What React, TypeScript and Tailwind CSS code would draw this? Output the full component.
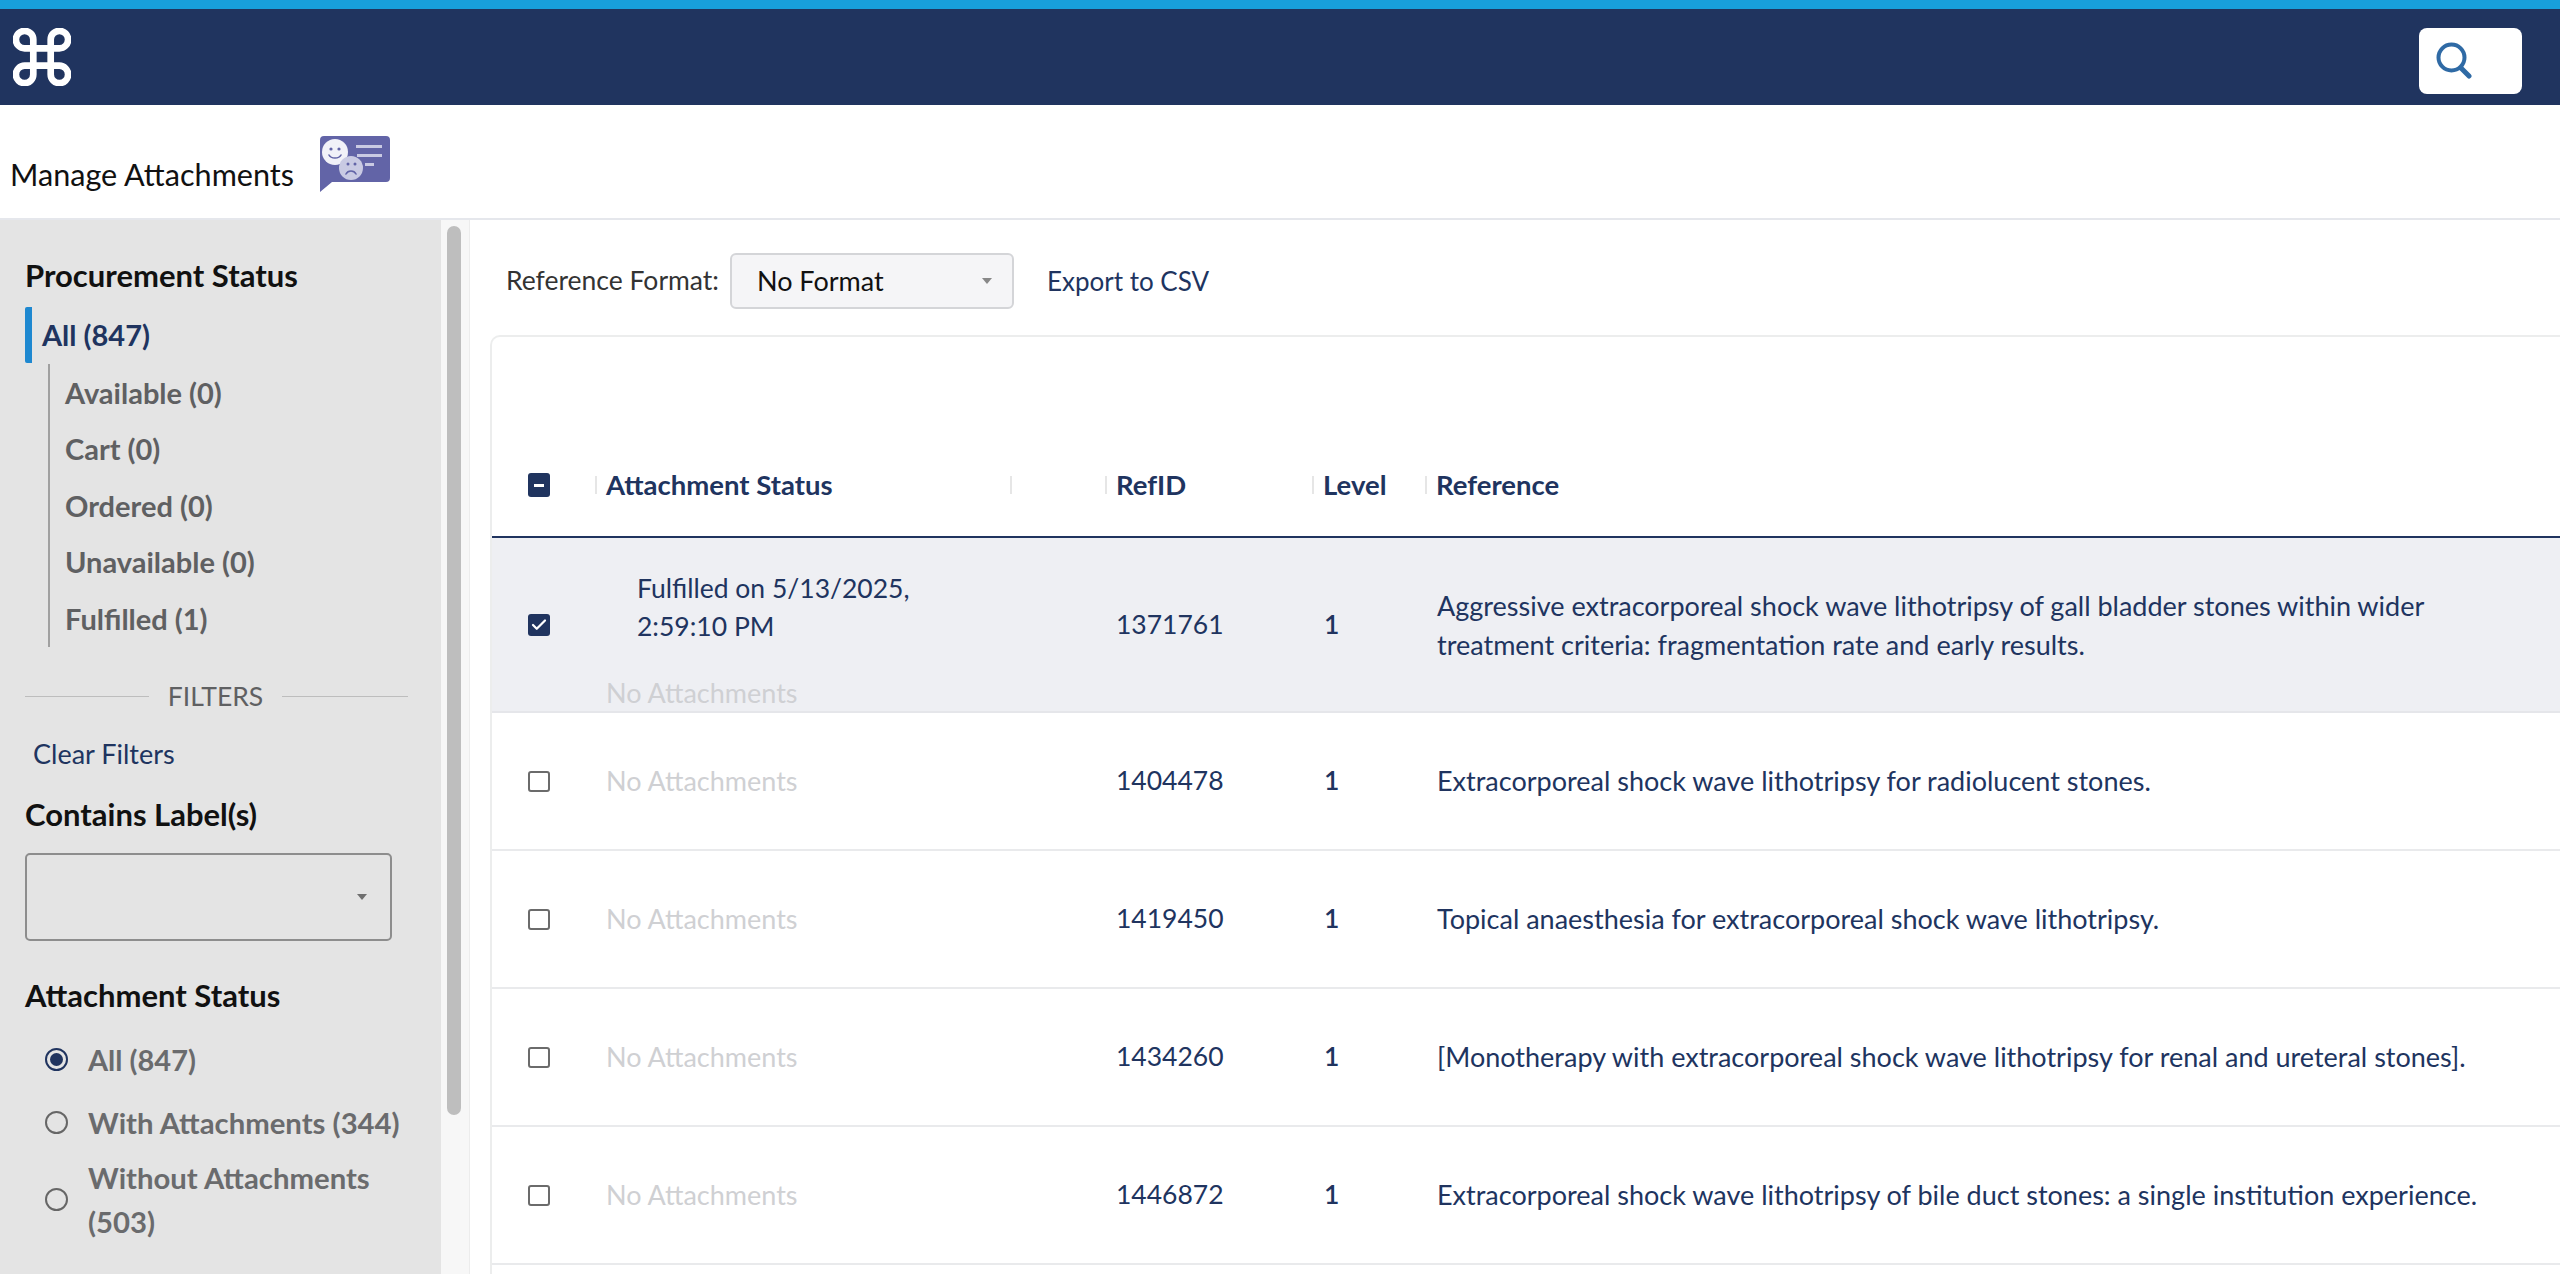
import { Check } from "lucide-react";

const font = "[font-family:Lato,sans-serif]";

const procurement = ["Available (0)", "Cart (0)", "Ordered (0)", "Unavailable (0)", "Fulfilled (1)"];

const rows = [
  { id: "1404478", text: "Extracorporeal shock wave lithotripsy for radiolucent stones." },
  { id: "1419450", text: "Topical anaesthesia for extracorporeal shock wave lithotripsy." },
  { id: "1434260", text: "[Monotherapy with extracorporeal shock wave lithotripsy for renal and ureteral stones]." },
  { id: "1446872", text: "Extracorporeal shock wave lithotripsy of bile duct stones: a single institution experience." },
];

const cols = "grid grid-cols-[103px_415px_95px_207px_113px_1fr] items-center";

function CommandLogo() {
  return (
    <svg viewBox="2 2 20 20" className="w-[58px] h-[58px]" fill="none" stroke="white" strokeWidth="2.3" strokeLinecap="round" strokeLinejoin="round">
      <path d="M15 6v12a3 3 0 1 0 3-3H6a3 3 0 1 0 3 3V6a3 3 0 1 0-3 3h12a3 3 0 1 0-3-3" />
    </svg>
  );
}

function FeedbackIcon() {
  return (
    <svg viewBox="0 0 70 56" className="w-[70px] h-[56px]">
      <path d="M4 0h62a4 4 0 0 1 4 4v38a4 4 0 0 1-4 4H12L0 56V4a4 4 0 0 1 4-4z" fill="#6264a7" />
      <circle cx="15" cy="16" r="13" fill="#f1f1f8" />
      <circle cx="11" cy="13" r="1.6" fill="#6264a7" />
      <circle cx="19" cy="13" r="1.6" fill="#6264a7" />
      <path d="M9 19c2 4 10 4 12 0" fill="none" stroke="#6264a7" strokeWidth="1.6" strokeLinecap="round" />
      <circle cx="31" cy="32" r="12" fill="#c9cae3" />
      <circle cx="28" cy="28" r="1.5" fill="#6264a7" />
      <circle cx="35" cy="28" r="1.5" fill="#6264a7" />
      <path d="M26 38c2-4 8-4 10 0" fill="none" stroke="#6264a7" strokeWidth="1.6" strokeLinecap="round" />
      <rect x="36" y="9" width="26" height="3" fill="#c9cae3" />
      <rect x="37" y="18" width="25" height="3" fill="#c9cae3" />
      <rect x="45" y="27" width="9" height="3" fill="#c9cae3" />
    </svg>
  );
}

function SearchGlyph() {
  return (
    <svg viewBox="0 0 36 38" className="w-[36px] h-[38px]" fill="none" stroke="#2f6aa5" strokeLinecap="round">
      <circle cx="15.5" cy="15.5" r="13" strokeWidth="4" />
      <path d="M25 26l8 8" strokeWidth="5" />
    </svg>
  );
}

function Caret({ color = "#6f6f6f" }: { color?: string }) {
  return <span className="w-0 h-0 border-l-[5px] border-r-[5px] border-t-[6px] border-l-transparent border-r-transparent" style={{ borderTopColor: color }} />;
}

function Radio({ checked }: { checked?: boolean }) {
  return (
    <span className={`shrink-0 w-[23px] h-[23px] rounded-full border-2 flex items-center justify-center ${checked ? "border-[#20345f]" : "border-[#666666]"}`}>
      {checked && <span className="w-[13px] h-[13px] rounded-full bg-[#20345f]" />}
    </span>
  );
}

function Box({ checked }: { checked?: boolean }) {
  if (checked) {
    return (
      <span className="w-[22px] h-[22px] ml-[36px] rounded-[3px] bg-[#20345f] flex items-center justify-center">
        <Check className="w-[18px] h-[18px] text-white" strokeWidth={3} />
      </span>
    );
  }
  return <span className="w-[22px] h-[21px] ml-[36px] rounded-[3px] border-2 border-[#6b6b6b] bg-white" />;
}

function HeadCell({ label }: { label?: string }) {
  return (
    <div className="flex items-center h-[38px]">
      <span className="w-[2px] h-[18px] bg-[#e6e6e6] mr-[9px]" />
      {label && <span className="text-[27.5px] font-bold text-[#20345f] whitespace-nowrap">{label}</span>}
    </div>
  );
}

function NoAttachments() {
  return <span className="block text-[27px] leading-[38px] text-[#cfd0d3] whitespace-nowrap">No Attachments</span>;
}

export default function App() {
  return (
    <div className={`${font} w-[2560px] h-[1274px] overflow-hidden bg-white flex flex-col`}>
      <div className="h-[9px] bg-[#189fdb]" />
      <header className="h-[96px] bg-[#20345f] flex items-center justify-between pl-[13px] pr-[38px]">
        <CommandLogo />
        <div className="w-[103px] h-[66px] mt-[7px] bg-white rounded-[8px] flex items-center pl-[17px]">
          <SearchGlyph />
        </div>
      </header>

      <div className="h-[115px] border-b-2 border-[#e5e7ec] flex items-start pl-[10px] pt-[31px]">
        <h1 className="text-[30.6px] leading-[40px] mt-[19px] text-[#111111] whitespace-nowrap">Manage Attachments</h1>
        <div className="ml-[26px]"><FeedbackIcon /></div>
      </div>

      <div className="flex flex-1 min-h-0">
        <aside className="w-[441px] bg-[#e4e4e4] pl-[25px] pt-[35px] shrink-0">
          <h2 className="text-[31px] leading-[40px] font-bold text-[#111111] whitespace-nowrap">Procurement Status</h2>
          <div className="mt-[12px] h-[56px] border-l-[7px] border-[#1e88d0] rounded-[2px] pl-[10px] flex items-center">
            <span className="text-[29px] font-bold text-[#20345f]">All (847)</span>
          </div>
          <div className="mt-[1px] ml-[23px] border-l-2 border-[#a0a0a0] pl-[15px]">
            {procurement.map((p) => (
              <div key={p} className="h-[56.6px] flex items-center text-[29px] font-bold text-[#5f6062]">{p}</div>
            ))}
          </div>
          <div className="mt-[32px] h-[36px] w-[383px] flex items-center">
            <span className="h-[1px] w-[124px] bg-[#bdbdbd]" />
            <span className="flex-1 text-center text-[26.5px] text-[#5f6062]">FILTERS</span>
            <span className="h-[1px] w-[126px] bg-[#bdbdbd]" />
          </div>
          <div className="mt-[21px] ml-[8px] h-[36px] flex items-center text-[27px] text-[#20345f]">Clear Filters</div>
          <h2 className="mt-[22px] text-[31px] leading-[40px] font-bold text-[#111111]">Contains Label(s)</h2>
          <div className="mt-[19px] w-[367px] h-[88px] border-2 border-[#8d8d8d] rounded-[5px] flex items-center justify-end pr-[23px]">
            <Caret />
          </div>
          <h2 className="mt-[34px] text-[31px] leading-[40px] font-bold text-[#111111]">Attachment Status</h2>
          <div className="mt-[23px] ml-[20px] h-[44px] flex items-center gap-[20px] text-[29px] font-bold text-[#6a6b6d]">
            <Radio checked />All (847)
          </div>
          <div className="mt-[19px] ml-[20px] h-[44px] flex items-center gap-[20px] text-[29.3px] font-bold text-[#6a6b6d] whitespace-nowrap">
            <Radio />With Attachments (344)
          </div>
          <div className="mt-[11px] ml-[20px] flex items-center gap-[20px] text-[29.3px] leading-[44px] font-bold text-[#6a6b6d]">
            <Radio />
            <span className="w-[300px]">Without Attachments (503)</span>
          </div>
        </aside>

        <div className="w-[29px] shrink-0 bg-[#f7f7f7] border-r border-[#ececec] pl-[6px] pr-[8px] pt-[6px]">
          <div className="h-[889px] rounded-[7px] bg-[#bebebe]" />
        </div>

        <main className="flex-1 min-w-0">
          <div className="pt-[34px] pl-[36px] flex items-center h-[88px]">
            <span className="text-[26.5px] text-[#333333] whitespace-nowrap">Reference Format:</span>
            <div className="ml-[11px] w-[284px] h-[56px] bg-[#f5f5f7] border-2 border-[#d4d5d8] rounded-[6px] flex items-center justify-between pl-[25px] pr-[20px]">
              <span className="text-[27px] text-[#111111]">No Format</span>
              <Caret color="#888888" />
            </div>
            <span className="ml-[33px] text-[26px] text-[#20345f] whitespace-nowrap">Export to CSV</span>
          </div>

          <section className="mt-[27px] ml-[20px] border-l-2 border-t-2 border-[#eceded] rounded-tl-[10px]">
            <div className={`${cols} pt-[129px] pb-[32px] border-b-2 border-[#20345f]`}>
              <span className="w-[22px] h-[24px] ml-[36px] rounded-[3px] bg-[#20345f] flex items-center justify-center">
                <span className="w-[10px] h-[3px] bg-white" />
              </span>
              <HeadCell label="Attachment Status" />
              <HeadCell />
              <HeadCell label="RefID" />
              <HeadCell label="Level" />
              <HeadCell label="Reference" />
            </div>

            <div className={`${cols} h-[175px] bg-[#eeeff3] border-b-2 border-[#e5e6ea] text-[#20345f] text-[26.5px]`}>
              <Box checked />
              <div className="col-span-2 pl-[11px] pt-[31px]">
                <p className="pl-[31px] leading-[38px] w-[340px]">Fulfilled on 5/13/2025, 2:59:10 PM</p>
                <div className="mt-[29px]"><NoAttachments /></div>
              </div>
              <div className="pl-[11px]">1371761</div>
              <div className="pl-[12px] font-semibold">1</div>
              <p className="pl-[12px] text-[27px] leading-[39px] w-[1040px]">
                Aggressive extracorporeal shock wave lithotripsy of gall bladder stones within wider treatment criteria: fragmentation rate and early results.
              </p>
            </div>

            {rows.map((r) => (
              <div key={r.id} className={`${cols} h-[138px] border-b-2 border-[#e9eaec] text-[#20345f] text-[26.5px]`}>
                <Box />
                <div className="col-span-2 pl-[11px]"><NoAttachments /></div>
                <div className="pl-[11px]">{r.id}</div>
                <div className="pl-[12px] font-semibold">1</div>
                <div className="pl-[12px] text-[27px] whitespace-nowrap">{r.text}</div>
              </div>
            ))}
            <div className="h-[40px]" />
          </section>
        </main>
      </div>
    </div>
  );
}
